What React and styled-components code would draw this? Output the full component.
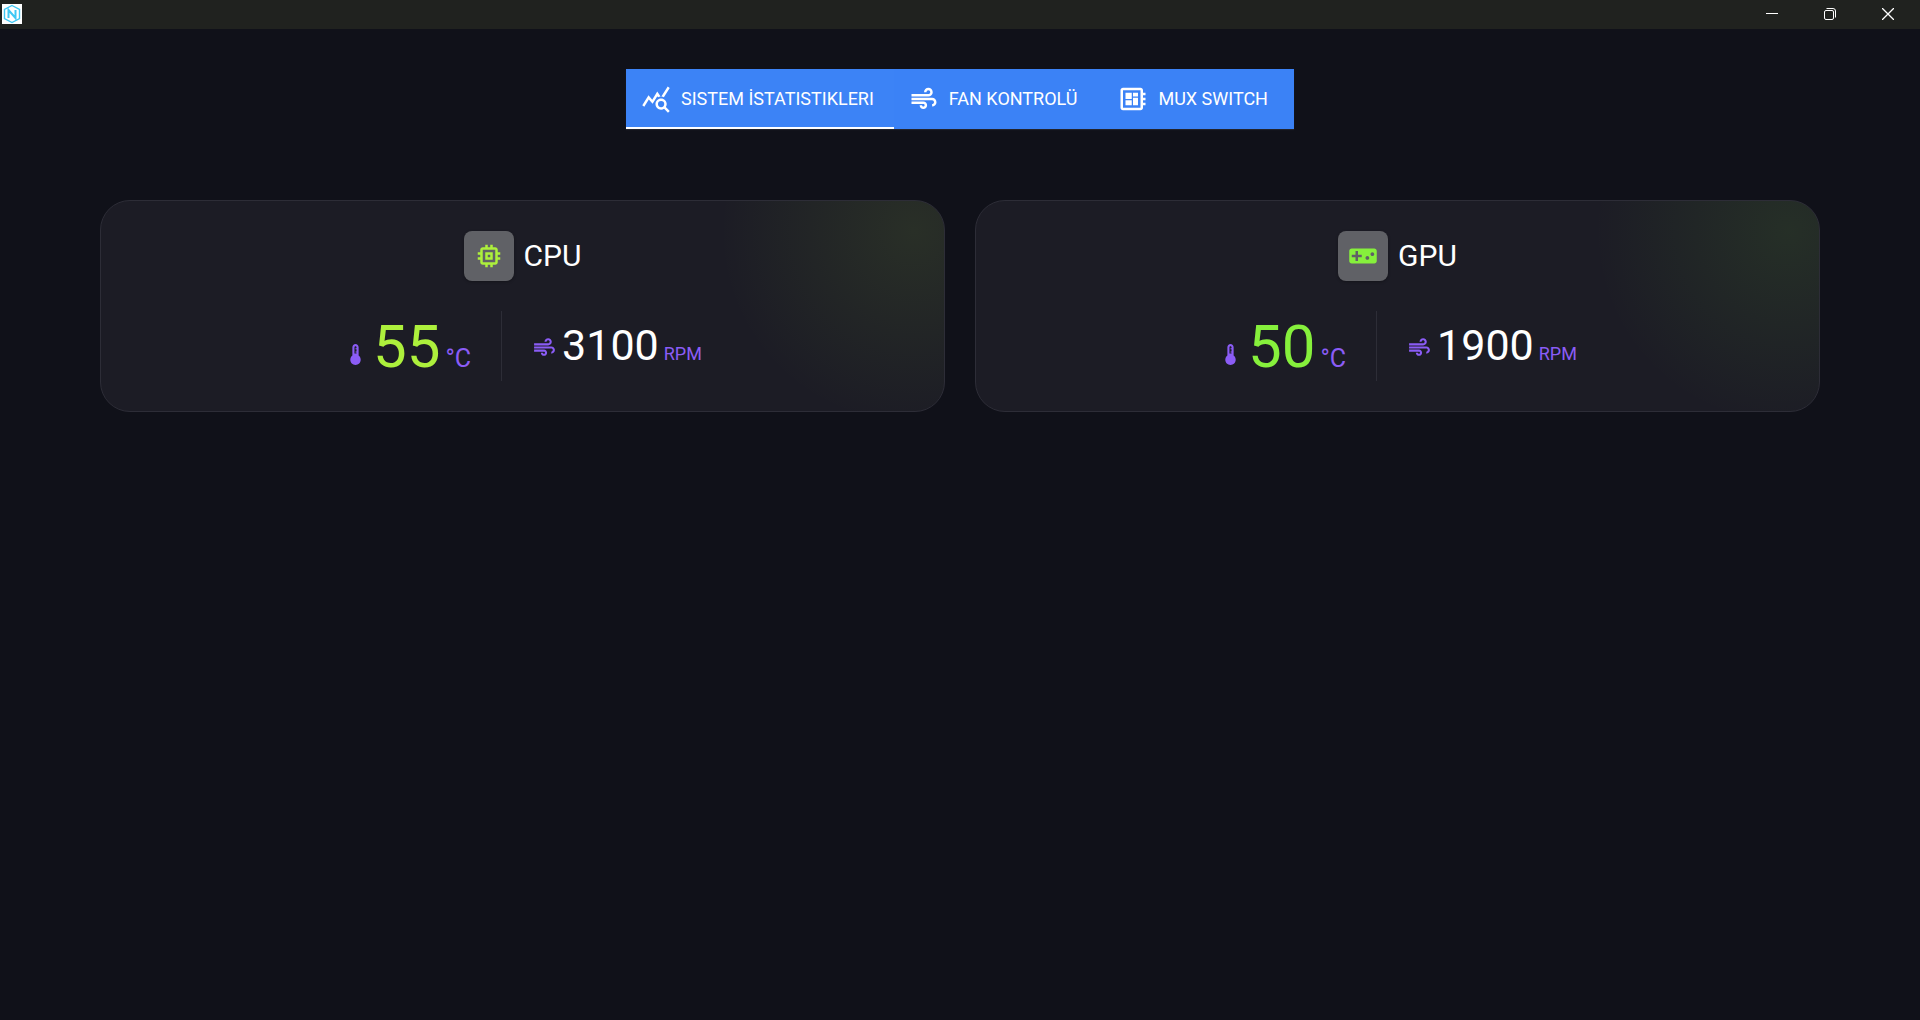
import React from "react";
import styled, { createGlobalStyle } from "styled-components";
import {
  MdAir,
  MdDeveloperBoard,
  MdMemory,
  MdQueryStats,
  MdThermostat,
  MdVideogameAsset,
} from "react-icons/md";

const GlobalStyle = createGlobalStyle`
  * {
    box-sizing: border-box;
  }
  body {
    margin: 0;
    background-color: #101119;
    color: #ffffff;
    font-family: Roboto, "Liberation Sans", sans-serif;
  }
  button {
    padding: 0;
    border: 0;
    background: none;
    color: inherit;
    font: inherit;
    cursor: pointer;
  }
`;

const Window = styled.div`
  display: flex;
  flex-direction: column;
  min-height: 100vh;
`;

const TitleBar = styled.header`
  display: flex;
  align-items: center;
  justify-content: space-between;
  padding: 0 3px 1px 2px;
  background-color: #20221f;
`;

const AppLogo = styled.svg`
  display: block;
  width: 20px;
  height: 20px;
  background-color: #ffffff;
`;

const WindowButtons = styled.div`
  display: flex;
`;

const WindowButton = styled.button`
  display: flex;
  align-items: center;
  justify-content: center;
  width: 58px;
  height: 28px;
`;

const Main = styled.main`
  display: flex;
  flex-direction: column;
  align-items: center;
  gap: 71px;
  padding: 40px 100px;
`;

const TabBar = styled.nav`
  display: flex;
  height: 60px;
  background-color: #3b82f6;
  box-shadow: 0 1px 1px rgba(255, 255, 255, 0.08);
`;

const Tab = styled.button`
  display: flex;
  align-items: center;
  gap: 10px;
  padding: 0 ${(props) => (props.$active ? "20px" : "26px")} 0 15px;
  background-color: ${(props) => (props.$active ? "#3c83f6" : "transparent")};
  box-shadow: ${(props) => (props.$active ? "inset 0 -2px #ffffff" : "none")};
  font-size: 18px;
  line-height: 30px;
  white-space: nowrap;

  svg {
    width: 30px;
    height: 30px;
  }
`;

const Cards = styled.div`
  display: grid;
  grid-template-columns: 1fr 1fr;
  gap: 30px;
  width: 100%;
`;

const Card = styled.section`
  display: flex;
  flex-direction: column;
  align-items: center;
  gap: 30px;
  padding: 30px;
  border: 1px solid #2d2d37;
  border-radius: 30px;
  background: radial-gradient(
      circle 195px at calc(100% - 30px) 30px,
      ${(props) => props.$glow},
      transparent
    )
    #1c1c25;
`;

const CardHead = styled.div`
  display: flex;
  align-items: center;
  gap: 10px;
`;

const Chip = styled.span`
  display: flex;
  align-items: center;
  justify-content: center;
  width: 50px;
  height: 50px;
  border-radius: 8px;
  background-color: #606166;
  box-shadow: 0 1px 3px rgba(0, 0, 0, 0.3);
  color: ${(props) => props.$color};

  svg {
    width: 30px;
    height: 30px;
  }
`;

const CardTitle = styled.h2`
  margin: 0;
  font-size: 30px;
  font-weight: 400;
  line-height: 50px;
`;

const Readings = styled.div`
  display: flex;
`;

const Reading = styled.div`
  display: flex;
  align-items: baseline;
  gap: 5px;
  height: 70px;

  & + & {
    margin-left: 30px;
    padding-left: 30px;
    border-left: 1px solid #2d2d37;
  }

  svg {
    width: 25px;
    height: 25px;
    color: #8b5cf6;
  }
`;

const Temperature = styled.span`
  color: ${(props) => props.$color};
  font-size: 60px;
  line-height: 72px;
`;

const Speed = styled.span`
  font-size: 43px;
  line-height: 68px;
`;

const Unit = styled.span`
  color: #8b5cf6;
  font-size: ${(props) => (props.$small ? "18px" : "25px")};
`;

const tabs = [
  { label: "SISTEM İSTATISTIKLERI", icon: MdQueryStats, active: true },
  { label: "FAN KONTROLÜ", icon: MdAir },
  { label: "MUX SWITCH", icon: MdDeveloperBoard },
];

const devices = [
  {
    name: "CPU",
    icon: MdMemory,
    temperature: 55,
    rpm: 3100,
    color: "#adf03c",
    glow: "rgba(173, 240, 60, 0.09)",
  },
  {
    name: "GPU",
    icon: MdVideogameAsset,
    temperature: 50,
    rpm: 1900,
    color: "#86f03c",
    glow: "rgba(134, 240, 60, 0.09)",
  },
];

const App = () => {
  return (
    <Window>
      <GlobalStyle />
      <TitleBar>
        <AppLogo viewBox="0 0 20 20" fill="none" stroke="#3fc8f4">
          <path d="M10 1.5 17.5 5.5v9L10 18.5 2.5 14.5v-9z" strokeWidth="1.4" />
          <path d="M6.5 14V6l7 8V6" strokeWidth="2" />
        </AppLogo>
        <WindowButtons>
          <WindowButton aria-label="Minimize">
            <svg width="12" height="12" viewBox="0 0 12 12" stroke="#ffffff">
              <path d="M0 5.5h12" />
            </svg>
          </WindowButton>
          <WindowButton aria-label="Restore">
            <svg width="12" height="12" viewBox="0 0 12 12" fill="none" stroke="#ffffff">
              <rect x="0.5" y="2.5" width="9" height="9" rx="1.5" />
              <path d="M2.5 .5H9A2.5 2.5 0 0 1 11.5 3v6.5" />
            </svg>
          </WindowButton>
          <WindowButton aria-label="Close">
            <svg width="12" height="12" viewBox="0 0 12 12" stroke="#ffffff" strokeWidth="1.3">
              <path d="M0 0l12 12M12 0L0 12" />
            </svg>
          </WindowButton>
        </WindowButtons>
      </TitleBar>

      <Main>
        <TabBar>
          {tabs.map(({ label, icon: Icon, active }) => (
            <Tab key={label} $active={active}>
              <Icon />
              {label}
            </Tab>
          ))}
        </TabBar>

        <Cards>
          {devices.map(({ name, icon: Icon, temperature, rpm, color, glow }) => (
            <Card key={name} $glow={glow}>
              <CardHead>
                <Chip $color={color}>
                  <Icon />
                </Chip>
                <CardTitle>{name}</CardTitle>
              </CardHead>
              <Readings>
                <Reading>
                  <MdThermostat />
                  <Temperature $color={color}>{temperature}</Temperature>
                  <Unit>°C</Unit>
                </Reading>
                <Reading>
                  <MdAir />
                  <Speed>{rpm}</Speed>
                  <Unit $small>RPM</Unit>
                </Reading>
              </Readings>
            </Card>
          ))}
        </Cards>
      </Main>
    </Window>
  );
};

export default App;
